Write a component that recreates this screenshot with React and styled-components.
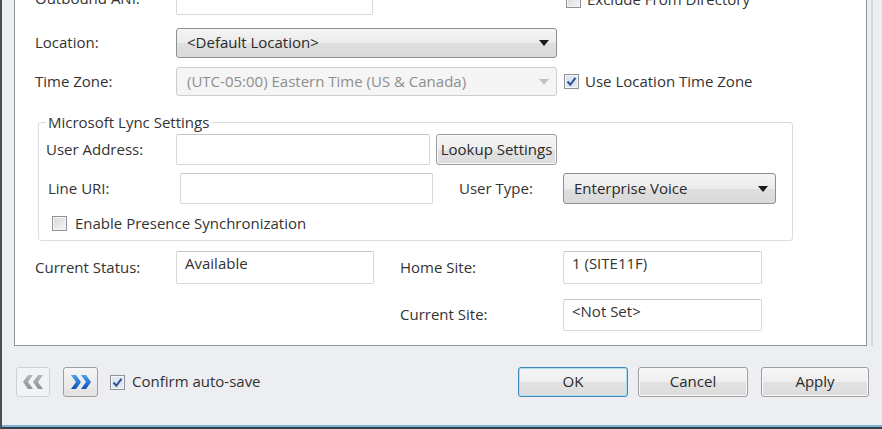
import styled, { createGlobalStyle } from "styled-components";

const Global = createGlobalStyle`
  html, body { margin: 0; height: 100%; overflow: hidden; }
  body {
    font-family: "Open Sans", "Noto Sans", "DejaVu Sans", sans-serif;
    font-size: 15px;
    color: #333;
    background: #2f3a44;
  }
  * { box-sizing: border-box; }
`;

const Window = styled.div`
  width: 882px;
  height: 429px;
  display: flex;
  flex-direction: column;
  background: #eceef1;
  border-left: 2px solid #4b4f54;
  border-bottom: 2px solid #34404a;
  overflow: hidden;
`;

const Body = styled.div`
  padding: 0 4px 0 12px;
  margin-right: 9px;
  border-right: 2px solid #d2d7dc;
`;

const Panel = styled.div`
  margin-top: -32px;
  background: #fff;
  border: 1px solid #8f9296;
  padding: 16px 0 14px 20px;
`;

const Row = styled.div`
  display: flex;
  align-items: center;
  height: ${(p) => p.$h}px;
  margin-top: ${(p) => p.$mt || 0}px;
`;

const Label = styled.div`
  width: ${(p) => p.$w}px;
  margin-left: ${(p) => p.$ml || 0}px;
  margin-top: ${(p) => p.$dy ?? -2}px;
  flex: none;
  white-space: nowrap;
`;

const TextBox = styled.div`
  width: ${(p) => p.$w}px;
  height: 100%;
  margin-left: ${(p) => p.$ml || 0}px;
  flex: none;
  background: #fff;
  border: 1px solid #d6d8da;
  border-top-color: #c3c6c9;
  border-radius: 2px;
  padding: 1px 8px;
  line-height: 20px;
  white-space: nowrap;
`;

const Select = styled.div`
  width: ${(p) => p.$w}px;
  height: 100%;
  margin-left: ${(p) => p.$ml || 0}px;
  flex: none;
  display: flex;
  align-items: center;
  justify-content: space-between;
  padding: 0 7px 2px 10px;
  border-radius: 3px;
  border: 1px solid ${(p) => (p.$disabled ? "#cbcdcf" : "#8d8f91")};
  background: ${(p) =>
    p.$disabled
      ? "#f5f5f5"
      : "linear-gradient(#f4f4f4 0%, #ececec 50%, #dfdfdf 51%, #d9d9d9 100%)"};
  color: ${(p) => (p.$disabled ? "#8e8e8e" : "#2a2a2a")};
  white-space: nowrap;
`;

const Arrow = styled.span`
  width: 0;
  height: 0;
  margin-top: 2px;
  border-left: 5px solid transparent;
  border-right: 5px solid transparent;
  border-top: 6px solid ${(p) => (p.$disabled ? "#c2c2c2" : "#1a1a1a")};
`;

const Button = styled.button`
  font: inherit;
  color: #2a2a2a;
  width: ${(p) => p.$w}px;
  height: ${(p) => p.$h || 30}px;
  margin-left: ${(p) => p.$ml || 0}px;
  flex: none;
  padding: 0 0 2px;
  white-space: nowrap;
  border-radius: 3px;
  border: 1px solid ${(p) => (p.$primary ? "#3e88b8" : "#9a9c9e")};
  box-shadow: ${(p) => (p.$primary ? "inset 0 0 0 1px #aee0f4" : "inset 0 0 0 1px #fafafa")};
  background: linear-gradient(#f6f6f6 0%, #eeeeee 50%, #e2e2e2 51%, #dcdcdc 100%);
`;

const Check = styled.span`
  width: 15px;
  height: 15px;
  flex: none;
  margin-left: ${(p) => p.$ml || 0}px;
  margin-right: ${(p) => p.$mr || 6}px;
  border: 1px solid #8f9194;
  background: ${(p) => (p.$on ? "#dfe6f0" : "linear-gradient(135deg, #d8d8d8, #f4f4f4)")};
  box-shadow: inset 0 0 0 1px #f4f6f8;
  display: flex;
  align-items: center;
  justify-content: center;
`;

const CheckLine = styled.div`
  display: flex;
  align-items: center;
  height: 100%;
  margin-left: ${(p) => p.$ml || 0}px;
  white-space: nowrap;
  span + * { margin-top: -2px; }
`;

const Group = styled.fieldset`
  margin: 16px 0 0 3px;
  width: 755px;
  padding: 2px 7px 5px 7px;
  border: 1px solid #d7dde2;
  border-radius: 3px;
  min-width: 0;
`;

const Legend = styled.legend`
  padding: 0 2px;
  line-height: 20px;
  color: #333;
`;

const Footer = styled.div`
  flex: 1;
  display: flex;
  align-items: flex-start;
  padding: 21px 13px 0 14px;
  border-bottom: 2px solid #7db3d6;
`;

const FooterChecks = styled.div`
  height: 30px;
  display: flex;
`;

const NavButton = styled.button`
  width: ${(p) => p.$w}px;
  height: 30px;
  margin-left: ${(p) => p.$ml || 0}px;
  padding: 0;
  display: flex;
  align-items: center;
  justify-content: center;
  border-radius: 3px;
  border: 1px solid ${(p) => (p.$disabled ? "#cfd1d3" : "#9c9ea0")};
  background: ${(p) =>
    p.$disabled ? "#f2f3f4" : "linear-gradient(#f6f6f6, #e2e2e2)"};
`;

const Spacer = styled.div`
  flex: 1;
`;

function Tick() {
  return (
    <svg width="11" height="11" viewBox="0 0 11 11">
      <path d="M1.5 5.5 L4.3 8.6 L9.5 1.8" fill="none" stroke="#2f5296" strokeWidth="2" />
    </svg>
  );
}

function Chevrons({ dir, color }) {
  const d =
    dir === "left"
      ? "M10 1 L5 8 L10 15 L5 15 L0 8 L5 1 Z M20 1 L15 8 L20 15 L15 15 L10 8 L15 1 Z"
      : "M0 1 L5 8 L0 15 L5 15 L10 8 L5 1 Z M10 1 L15 8 L10 15 L15 15 L20 8 L15 1 Z";
  return (
    <svg width="20" height="16" viewBox="0 0 20 16">
      <defs>
        <linearGradient id={`g-${dir}`} x1="0" y1="0" x2="0" y2="1">
          <stop offset="0" stopColor={color[0]} />
          <stop offset="1" stopColor={color[1]} />
        </linearGradient>
      </defs>
      <path d={d} fill={`url(#g-${dir})`} />
    </svg>
  );
}

export default function App() {
  return (
    <>
      <Global />
      <Window>
        <Body>
          <Panel>
            <Row $h={30}>
              <Label $w={141} $dy={-5}>Outbound ANI:</Label>
              <TextBox $w={197} />
              <CheckLine $ml={193}>
                <Check />
                <span>Exclude From Directory</span>
              </CheckLine>
            </Row>
            <Row $h={30} $mt={13}>
              <Label $w={141}>Location:</Label>
              <Select $w={381}>
                &lt;Default Location&gt;
                <Arrow />
              </Select>
            </Row>
            <Row $h={29} $mt={9}>
              <Label $w={141}>Time Zone:</Label>
              <Select $w={381} $disabled>
                (UTC-05:00) Eastern Time (US &amp; Canada)
                <Arrow $disabled />
              </Select>
              <CheckLine $ml={7}>
                <Check $on>
                  <Tick />
                </Check>
                <span>Use Location Time Zone</span>
              </CheckLine>
            </Row>

            <Group>
              <Legend>Microsoft Lync Settings</Legend>
              <Row $h={31}>
                <Label $w={130}>User Address:</Label>
                <TextBox $w={254} />
                <Button $w={121} $h={31} $ml={6}>
                  Lookup Settings
                </Button>
              </Row>
              <Row $h={31} $mt={8}>
                <Label $w={132} $ml={2}>
                  Line URI:
                </Label>
                <TextBox $w={253} />
                <Label $w={104} $ml={26}>
                  User Type:
                </Label>
                <Select $w={213}>
                  Enterprise Voice
                  <Arrow />
                </Select>
              </Row>
              <Row $h={23} $mt={8}>
                <CheckLine $ml={6}>
                  <Check $mr={8} />
                  <span>Enable Presence Synchronization</span>
                </CheckLine>
              </Row>
            </Group>

            <Row $h={33} $mt={10}>
              <Label $w={141}>Current Status:</Label>
              <TextBox $w={198}>Available</TextBox>
              <Label $w={163} $ml={26}>
                Home Site:
              </Label>
              <TextBox $w={199}>1 (SITE11F)</TextBox>
            </Row>
            <Row $h={32} $mt={15}>
              <Label $w={163} $ml={365}>
                Current Site:
              </Label>
              <TextBox $w={199}>&lt;Not Set&gt;</TextBox>
            </Row>
          </Panel>
        </Body>

        <Footer>
          <NavButton $w={34} $disabled>
            <Chevrons dir="left" color={["#b4b6b8", "#8f9193"]} />
          </NavButton>
          <NavButton $w={35} $ml={13}>
            <Chevrons dir="right" color={["#4aa2f0", "#0d4fb8"]} />
          </NavButton>
          <FooterChecks>
            <CheckLine $ml={12}>
              <Check $on $mr={7}>
                <Tick />
              </Check>
              <span>Confirm auto-save</span>
            </CheckLine>
          </FooterChecks>
          <Spacer />
          <Button $w={110} $primary>
            OK
          </Button>
          <Button $w={110} $ml={10}>
            Cancel
          </Button>
          <Button $w={108} $ml={13}>
            Apply
          </Button>
        </Footer>
      </Window>
    </>
  );
}
